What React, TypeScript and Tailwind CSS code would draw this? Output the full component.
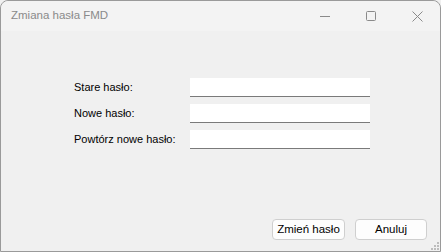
import { useState } from "react";

const fields = ["Stare hasło:", "Nowe hasło:", "Powtórz nowe hasło:"];

function App() {
  const [values, setValues] = useState<string[]>(["", "", ""]);

  return (
    <div className="h-[252px] w-[441px] bg-[#f0f0f0] font-['Liberation_Sans',Arial,sans-serif] text-[11.5px] text-black">
      <div className="flex h-full w-full flex-col rounded-t-[8px] border border-[#9a9a9a]">
        <div className="flex h-[30px] items-center rounded-t-[8px] bg-[#f3f3f3]">
          <span className="flex-1 pl-[10px] text-[11.5px] text-[#8a8a8a]">Zmiana hasła FMD</span>
          <div className="flex h-full w-[46px] items-center justify-center">
            <svg width="10" height="10" viewBox="0 0 10 10">
              <line x1="0" y1="5.5" x2="10" y2="5.5" stroke="#8a8a8a" strokeWidth="1" />
            </svg>
          </div>
          <div className="flex h-full w-[46px] items-center justify-center">
            <svg width="10" height="10" viewBox="0 0 10 10">
              <rect x="0.5" y="0.5" width="9" height="9" rx="1" fill="none" stroke="#8a8a8a" strokeWidth="1" />
            </svg>
          </div>
          <div className="flex h-full w-[46px] items-center justify-center">
            <svg width="11" height="11" viewBox="0 0 11 11">
              <path d="M0.5 0.5 L10.5 10.5 M10.5 0.5 L0.5 10.5" stroke="#8a8a8a" strokeWidth="1" />
            </svg>
          </div>
        </div>

        <div className="relative flex flex-1 flex-col bg-[#f0f0f0]">
          <div className="flex flex-col gap-[7px] pl-[73px] pt-[47px]">
            {fields.map((label, i) => (
              <div key={label} className="flex h-[19px] items-center">
                <span className="w-[116px] shrink-0 whitespace-nowrap text-[11px]">{label}</span>
                <input
                  type="password"
                  value={values[i]}
                  onChange={(e) => {
                    const next = [...values];
                    next[i] = e.target.value;
                    setValues(next);
                  }}
                  className="h-[19px] w-[180px] border-b border-[#7a7a7a] bg-white outline-none"
                />
              </div>
            ))}
          </div>

          <div className="mt-auto flex justify-end gap-[10px] pb-[11px] pr-[13px]">
            <button className="h-[21px] w-[73px] rounded-[4px] border border-[#cfcfcf] bg-[#fdfdfd]">
              Zmień hasło
            </button>
            <button className="h-[21px] w-[72px] rounded-[4px] border border-[#cfcfcf] bg-[#fdfdfd]">
              Anuluj
            </button>
          </div>

          <svg className="absolute bottom-[1px] right-[1px]" width="10" height="10" viewBox="0 0 10 10">
            {[
              [8, 2],
              [8, 5],
              [5, 5],
              [8, 8],
              [5, 8],
              [2, 8],
            ].map(([x, y]) => (
              <rect key={`${x}-${y}`} x={x} y={y} width="2" height="2" fill="#bcbcbc" />
            ))}
          </svg>
        </div>
      </div>
    </div>
  );
}

export default App;
